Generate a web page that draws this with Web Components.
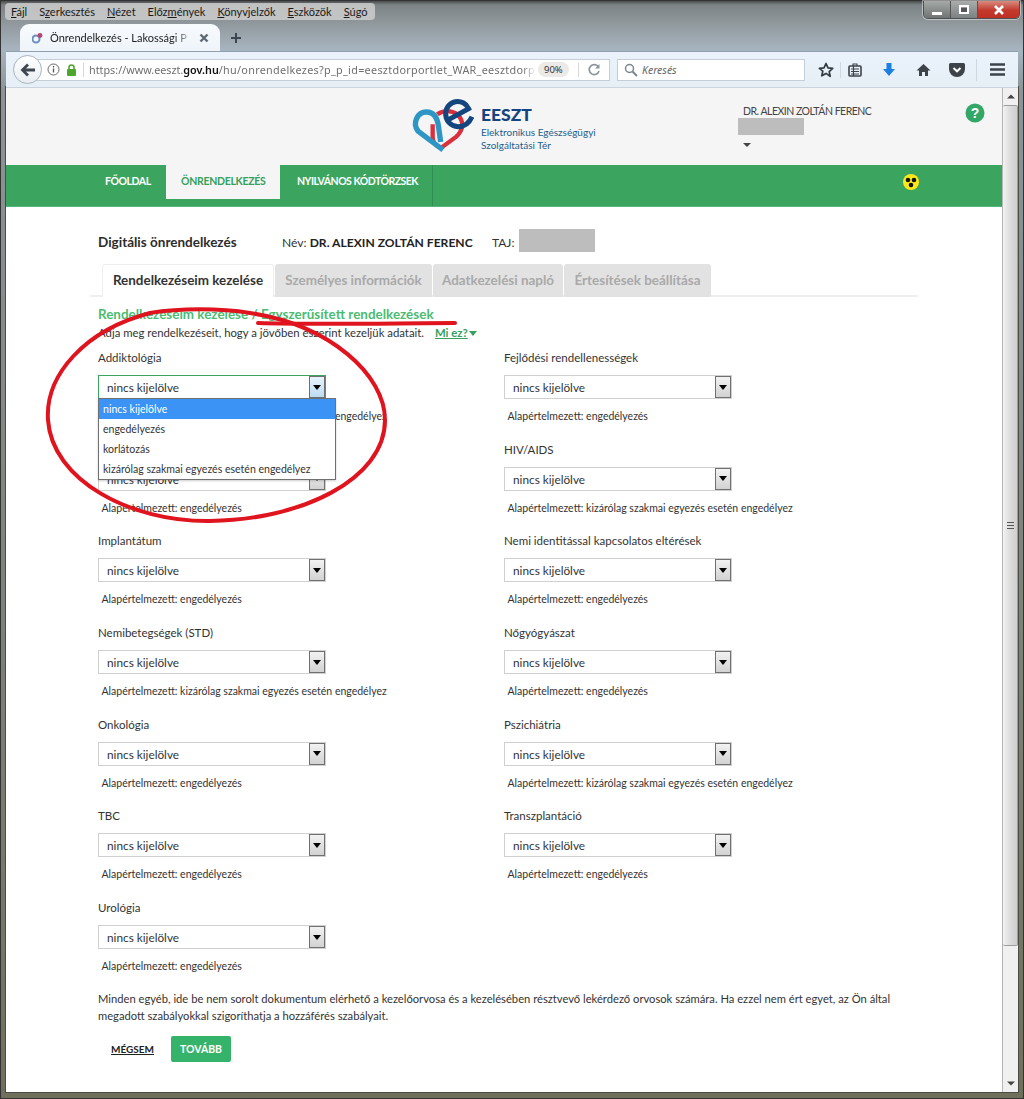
<!DOCTYPE html>
<html lang="hu"><head><meta charset="utf-8"><title>Önrendelkezés</title>
<style>
html,body{margin:0;padding:0;background:#000}
body{width:1024px;height:1099px;overflow:hidden;font-family:Lato,"Noto Sans",sans-serif}
</style></head><body>
<browser-window>
  <site-header></site-header>
  <site-nav></site-nav>
  <page-main>
    <form-row a-label="Addiktológia" a-note="Alapértelmezett: kizárólag szakmai egyezés esetén engedélyez" b-label="Fejlődési rendellenességek" b-note="Alapértelmezett: engedélyezés" open></form-row>
    <form-row a-label=" " a-note="Alapértelmezett: engedélyezés" b-label="HIV/AIDS" b-note="Alapértelmezett: kizárólag szakmai egyezés esetén engedélyez"></form-row>
    <form-row a-label="Implantátum" a-note="Alapértelmezett: engedélyezés" b-label="Nemi identitással kapcsolatos eltérések" b-note="Alapértelmezett: engedélyezés"></form-row>
    <form-row a-label="Nemibetegségek (STD)" a-note="Alapértelmezett: kizárólag szakmai egyezés esetén engedélyez" b-label="Nőgyógyászat" b-note="Alapértelmezett: engedélyezés"></form-row>
    <form-row a-label="Onkológia" a-note="Alapértelmezett: engedélyezés" b-label="Pszichiátria" b-note="Alapértelmezett: kizárólag szakmai egyezés esetén engedélyez"></form-row>
    <form-row a-label="TBC" a-note="Alapértelmezett: engedélyezés" b-label="Transzplantáció" b-note="Alapértelmezett: engedélyezés"></form-row>
    <form-row a-label="Urológia" a-note="Alapértelmezett: engedélyezés"></form-row>
  </page-main>
</browser-window>
<script>
const FONT='Lato,"Noto Sans",sans-serif';
function def(name,html,init){
  customElements.define(name,class extends HTMLElement{
    constructor(){super();this.attachShadow({mode:'open'});}
    connectedCallback(){this.shadowRoot.innerHTML=typeof html==='function'?html(this):html;if(init)init(this);}
  });
}
def('browser-window',`<style>
:host{display:block;width:1024px;height:1099px;box-sizing:border-box;position:relative;
background:linear-gradient(180deg,#3d3f40 0,#7d8385 5px,#8f979b 22px,#a7b4bf 50px,#8b9497 90px,#7d8078 60%,#6f705c 100%);padding:0 6px 7px;overflow:hidden;box-shadow:inset 0 0 0 1px #333}
.frame{display:flex;flex-direction:column;height:100%;margin:0 -6px;}
.view{flex:1;min-height:0;display:flex;margin:0 6px;background:#fff;border-top:1px solid #c9d4de;box-shadow:0 0 0 1px #4b4d45}
.page{width:996px;display:flex;flex-direction:column;overflow:hidden}
</style>
<div class="frame"><div><menu-bar></menu-bar><tab-strip></tab-strip><tool-bar></tool-bar></div>
<div class="view"><div class="page"><slot></slot></div><scroll-bar></scroll-bar></div></div>
<window-buttons></window-buttons>`);
def('window-buttons',`<style>
:host{position:absolute;left:923px;top:1px;width:95px;height:17px;display:flex;border:1px solid #4b4f52;border-top:0;border-radius:0 0 5px 5px;overflow:hidden;box-shadow:0 0 0 1px rgba(255,255,255,.45)}
div{display:flex;align-items:center;justify-content:center}
.a{width:26px;background:linear-gradient(#a5a9a8,#6f7473)}
.b{width:26px;background:linear-gradient(#a9adac,#7b8080);border-left:1px solid #555}
.c{flex:1;background:linear-gradient(#d88a80,#c33a2c 55%,#bd3024);border-left:1px solid #555}
</style><div class="a"><svg width="12" height="10"><rect x="1" y="7" width="10" height="3" fill="#fff"/></svg></div>
<div class="b"><svg width="12" height="10"><rect x="2" y="1" width="8" height="7" fill="none" stroke="#fff" stroke-width="2"/><rect x="3" y="3" width="6" height="4" fill="#555"/></svg></div>
<div class="c"><svg width="14" height="12"><path d="M3 2l8 8M11 2l-8 8" stroke="#fff" stroke-width="2.6"/></svg></div>`);
def('menu-bar',`<style>
:host{display:flex;gap:12px;box-sizing:border-box;margin:3px 0 0 5px;width:370px;height:17px;padding:0 0 0 6px;align-items:center;background:rgba(205,205,205,.85);border-radius:4px;font:11px/17px Lato,sans-serif;color:#1a1a1a}
u{text-underline-offset:1px}
</style><span><u>F</u>ájl</span><span>S<u>z</u>erkesztés</span><span><u>N</u>ézet</span><span>Előz<u>m</u>ények</span><span><u>K</u>önyvjelzők</span><span><u>E</u>szközök</span><span><u>S</u>úgó</span>`);
def('tab-strip',`<style>
:host{display:flex;align-items:center;height:27px;margin-top:4px;padding-left:20px;box-sizing:border-box;font:11px Lato,sans-serif;color:#222}
.tab{width:200px;height:27px;box-sizing:border-box;display:flex;align-items:center;background:linear-gradient(#f8fbfe,#eef4fa);border-radius:9px 9px 0 0;padding-left:12px;position:relative}
.t{margin-left:6px;width:144px;white-space:nowrap;-webkit-mask-image:linear-gradient(90deg,#000 86%,transparent);mask-image:linear-gradient(90deg,#000 86%,transparent)}
.x{margin-left:5px;color:#5f6a74}
.plus{margin-left:10px}
</style><div class="tab"><svg width="12" height="12" viewBox="0 0 12 12"><circle cx="4" cy="7" r="3.5" fill="none" stroke="#6a8fc0" stroke-width="2"/><circle cx="8" cy="3.5" r="2.400" fill="#b8456e"/></svg><span class="t">Önrendelkezés - Lakossági P</span><svg class="x" width="10" height="10" viewBox="0 0 10 10"><path d="M1.500 1.500l7 7M8.500 1.500l-7 7" stroke="#5f6a74" stroke-width="2.400"/></svg></div>
<svg class="plus" width="12" height="12"><path d="M6 1v10M1 6h10" stroke="#3c4650" stroke-width="2"/></svg>`);
def('tool-bar',`<style>
:host{display:flex;align-items:center;height:36px;box-sizing:border-box;margin:0 6px;padding:0 0 0 7px;background:linear-gradient(#eaf3fb,#e6eef6);border-top:1px solid #8fa0ae;position:relative;font:11.500px "Noto Sans",sans-serif}
.back{width:29px;height:29px;border:1px solid #a8b4be;border-radius:50%;background:linear-gradient(#fff,#e9eef2);display:flex;align-items:center;justify-content:center;box-sizing:border-box;z-index:1;flex:none}
.url{margin-left:-6px;width:574px;height:22px;box-sizing:border-box;background:#fff;border:1px solid #c4ced7;display:flex;align-items:center;padding-left:10px;flex:none}
.sep{width:1px;height:14px;background:#d8d8d8;margin:0 5px 0 6px;flex:none}
.addr{font-size:10.800px;color:#6f6f6f;white-space:nowrap;width:447px;flex:none;-webkit-mask-image:linear-gradient(90deg,#000 97%,transparent);mask-image:linear-gradient(90deg,#000 97%,transparent)}
.addr b{color:#111;font-weight:600}
.addr span{letter-spacing:.3px}
.zoom{font-size:9.500px;background:#eceae6;border-radius:8px;padding:1px 6px;color:#333;margin-left:2px;flex:none}
.search{margin-left:7px;width:188px;height:22px;box-sizing:border-box;background:#fff;border:1px solid #c4ced7;display:flex;align-items:center;padding-left:6px;color:#666;font-style:italic;font-size:10.500px;gap:4px;flex:none}
.icons{display:flex;align-items:center;margin-left:13px}
.i{display:flex;flex:none}
</style>
<div class="back"><svg width="16" height="14" viewBox="0 0 16 14"><path d="M8 1.500 2.500 7 8 12.500M3 7h12" fill="none" stroke="#3f4750" stroke-width="2.800"/></svg></div>
<div class="url">
<svg width="13" height="13" viewBox="0 0 13 13" style="flex:none"><circle cx="6.500" cy="6.500" r="5.500" fill="none" stroke="#666"/><path d="M6.500 5.500v4M6.500 3v1.600" stroke="#555" stroke-width="1.300"/></svg>
<svg width="11" height="12" viewBox="0 0 11 12" style="margin-left:6px;flex:none"><rect x="1" y="5" width="9" height="7" rx="1" fill="#4da52e"/><path d="M3 5V3.500a2.500 2.500 0 0 1 5 0V5" fill="none" stroke="#4da52e" stroke-width="1.600"/></svg>
<span class="sep"></span>
<span class="addr">https://www.eeszt.<b>gov.hu</b><span>/hu/onrendelkezes?p_p_id=eesztdorportlet_WAR_eesztdorp</span></span>
<span class="zoom">90%</span><span class="sep" style="margin:0 0 0 9px"></span>
<svg width="14" height="14" viewBox="0 0 14 14" style="margin-left:8px;flex:none"><path d="M11.500 4A5 5 0 1 0 12 8" fill="none" stroke="#8b959c" stroke-width="1.700"/><path d="M12.500 1v4.500H8z" fill="#8b959c"/></svg>
</div>
<div class="search"><svg width="14" height="14" viewBox="0 0 14 14"><circle cx="5.500" cy="5.500" r="4" fill="none" stroke="#7b858e" stroke-width="1.500"/><path d="M8.500 8.500 13 13" stroke="#7b858e" stroke-width="2"/></svg><span>Keresés</span></div>
<div class="icons">
<svg class="i" width="16" height="16" viewBox="0 0 16 16"><path d="M8 1.500l2 4.400 4.700.5-3.500 3.200 1 4.700L8 11.400l-4.200 2.400 1-4.700L1.300 6.400 6 5.900z" fill="none" stroke="#333a40" stroke-width="1.700" stroke-linejoin="round"/></svg>
<span style="width:1px;height:16px;background:#cfd8e0;margin:0 7px 0 6px"></span>
<svg class="i" width="14" height="14" viewBox="0 0 14 14"><rect x="1" y="3" width="12" height="10" rx="1" fill="none" stroke="#3c4349" stroke-width="1.600"/><path d="M5 3V1h4v2M3 6h8M3 8.500h8M3 11h8M5.500 3v10" stroke="#3c4349" stroke-width="1.100" fill="none"/></svg>
<svg class="i" width="14" height="15" viewBox="0 0 14 15" style="margin-left:20px"><path d="M4.500 1h5v6H13l-6 7-6-7h3.500z" fill="#1c80e2"/></svg>
<svg class="i" width="15" height="14" viewBox="0 0 15 14" style="margin-left:20px"><path d="M7.500 1 .5 7.500H3V13h3V9h3v4h3V7.500h2.500z" fill="#3c4349"/></svg>
<svg class="i" width="16" height="14" viewBox="0 0 16 14" style="margin-left:18px"><path d="M1.500 0h13A1.500 1.500 0 0 1 16 1.500V6A8 8 0 0 1 0 6V1.500A1.500 1.500 0 0 1 1.500 0z" fill="#3c4349"/><path d="M4.500 5 8 8.300 11.500 5" fill="none" stroke="#fff" stroke-width="2"/></svg>
<span style="width:1px;height:22px;background:#cfd8e0;margin:0 13px 0 11px"></span>
<svg class="i" width="15" height="13" viewBox="0 0 15 13"><path d="M0 1.500h15M0 6.500h15M0 11.500h15" stroke="#3c4349" stroke-width="2.600"/></svg>
</div>`);
def('scroll-bar',`<style>
:host{width:16px;flex:none;background:#f0f0f0;display:flex;flex-direction:column;align-items:stretch;box-sizing:border-box;border-left:1px solid #b5b5b5}
.btn{height:17px;display:flex;align-items:center;justify-content:center;flex:none}
.thumb{height:839px;flex:none;background:linear-gradient(90deg,#f3f3f3,#dcdcdc 50%,#cfcfcf);border:1px solid #9d9d9d;border-width:1px 1px 1px 0;border-radius:2px;display:flex;align-items:center;justify-content:center}
.sp{flex:1}
</style><div class="btn"><svg width="8" height="5"><path d="M0 4.500 4 .5l4 4z" fill="#444"/></svg></div>
<div class="thumb"><svg width="7" height="7"><path d="M0 .5h7M0 3.500h7M0 6.500h7" stroke="#555"/></svg></div><div class="sp"></div>
<div class="btn"><svg width="8" height="5"><path d="M0 .5 4 4.500l4-4z" fill="#444"/></svg></div>`);
def('site-header',`<style>
:host{display:flex;height:77px;flex:none;box-sizing:border-box;background:#f5f5f5;padding-top:8px;font-family:${FONT}}
.logo{margin-left:402px;display:flex;gap:1px;width:204px;flex:none}
.txt{color:#1d5f8f;font-size:10px;line-height:13px;padding-top:10px;white-space:nowrap}
.txt b{display:block;font-size:17.500px;line-height:17px;color:#14457e;font-weight:900;margin-bottom:3px}
.user{margin-left:126px;width:66px;flex:none;font-size:10.500px;color:#444;padding-top:8px;line-height:14px;white-space:nowrap}
.name{margin-left:5px;letter-spacing:-.5px}
.box{width:66px;height:17px;background:#bdbdbd;margin:0 0 8px}
.caret{width:0;height:0;border:4px solid transparent;border-top:4px solid #444;border-bottom:0;margin-left:5px}
.help{margin-left:161px;margin-top:7px;flex:none}
</style>
<div class="logo"><svg width="72" height="60" viewBox="0 0 216 180">
<path d="M74 85V125C74 140 85 150 100 155L145 122C168 100 168 75 148 55 130 42 105 42 88 55" fill="none" stroke="#d9303e" stroke-width="13"/>
<path d="M105 162 30 105C12 82 28 48 55 48 82 48 90 75 92 95L98 138" fill="none" stroke="#2e96c4" stroke-width="16"/>
<path d="M116 74 182 38A36 36 0 0 0 113 52 38 38 0 0 0 150 92C170 92 184 80 192 62" fill="none" stroke="#14457e" stroke-width="15"/>
</svg><div class="txt"><b>EESZT</b>Elektronikus Egészségügyi<br>Szolgáltatási Tér</div></div>
<div class="user"><div class="name">DR. ALEXIN ZOLTÁN FERENC</div><div class="box"></div><div class="caret"></div></div>
<svg class="help" width="20" height="20" viewBox="0 0 20 20"><circle cx="10" cy="10" r="9.500" fill="#33a768"/><text x="10" y="15" text-anchor="middle" font-family="Liberation Sans" font-weight="700" font-size="14" fill="#fff">?</text></svg>`);
def('site-nav',`<style>
:host{display:flex;height:42px;flex:none;box-sizing:border-box;background:#3ba55f;padding-left:84px;font:700 10.500px/33px ${FONT};letter-spacing:-.3px;color:#fff;border-bottom:1px solid #58b57a;position:relative;white-space:nowrap}
a{display:block;height:34px;padding:0 15px;box-sizing:border-box}
a.f{width:75px;letter-spacing:-.45px}
.on{background:#f5f5f5;color:#36a05c;margin-left:1px;width:114px}
.d{border-right:1px solid #2f8f50;height:41px;padding:0 14px 0 17px;width:153px;letter-spacing:-.5px}
.icon{margin:9px 0 0 470px;flex:none}
</style><a class="f">FŐOLDAL</a><a class="on">ÖNRENDELKEZÉS</a><a class="d">NYILVÁNOS KÓDTÖRZSEK</a>
<svg class="icon" width="16" height="16" viewBox="0 0 16 16"><circle cx="8" cy="8" r="8" fill="#ffe81a"/><circle cx="5" cy="6" r="2.300" fill="#111"/><circle cx="11" cy="6" r="2.300" fill="#111"/><circle cx="8" cy="11" r="2.300" fill="#111"/></svg>`);
def('page-main',`<style>
:host{display:block;position:relative;flex:1;background:#fff;box-sizing:border-box;padding:22px 0 0 92px;font:11.500px ${FONT};color:#333}
.top{display:flex;align-items:center;height:23px}
h1{font-size:13.500px;font-weight:700;margin:3px 0 0;width:184px;color:#2c2c2c}
.n{font-size:12.100px;width:210px;white-space:nowrap;margin-top:3px}.n b{font-weight:700;color:#222}
.taj{font-size:12px;margin-top:3px}.mask{width:76px;height:23px;background:#bdbdbd;margin-left:5px}
.tabs{display:flex;margin:12px 0 0 -8px;padding-left:12px;width:828px;box-sizing:border-box;border-bottom:2px solid #eee;height:33px;gap:1px}
.tab{height:33px;box-sizing:border-box;background:#e2e2e2;color:#a9a9a9;font:700 13.450px/32px ${FONT};text-align:center;border-radius:3px 3px 0 0}
.tab.on{background:#fff;color:#333;border:1px solid #eee;border-bottom:0;line-height:30px}
h2{font-size:13.450px;color:#4cbb72;margin:8px 0 0;line-height:18px;font-weight:700}
.lead{margin:2px 0 0;line-height:16px;font-size:11.350px;display:flex;white-space:pre}
.lead a{color:#36a05c;font-weight:700;text-decoration:underline;margin-left:8px}
.lead i{display:inline-block;border:4px solid transparent;border-top:5px solid #36a05c;border-bottom:0;margin:6px 0 0 1px}
.rows{margin-top:8px}
.end{margin:-1px 0 0;line-height:17px;width:810px;font-size:11.200px}
.acts{display:flex;align-items:center;margin:12px 0 0 13px;font-weight:700;font-size:10px}
.acts a{text-decoration:underline;color:#222;width:60px}
.acts button{width:60px;height:26px;border:0;border-radius:2px;background:#36b36b;color:#fff;font:700 10.500px ${FONT}}
.ann{position:absolute;left:0;top:0;pointer-events:none;z-index:5}
</style>
<div class="top"><h1>Digitális önrendelkezés</h1><span class="n">Név: <b>DR. ALEXIN ZOLTÁN FERENC</b></span><span class="taj">TAJ:</span><span class="mask"></span></div>
<div class="tabs"><div class="tab on" style="width:172px">Rendelkezéseim kezelése</div><div class="tab" style="width:157px">Személyes információk</div><div class="tab" style="width:130px">Adatkezelési napló</div><div class="tab" style="width:147px">Értesítések beállítása</div></div>
<h2>Rendelkezéseim kezelése / Egyszerűsített rendelkezések</h2>
<div class="lead">Adja meg rendelkezéseit, hogy a jövőben eszerint kezeljük adatait. <a>Mi ez?</a><i></i></div>
<div class="rows"><slot></slot></div>
<p class="end">Minden egyéb, ide be nem sorolt dokumentum elérhető a kezelőorvosa és a kezelésében résztvevő lekérdező orvosok számára. Ha ezzel nem ért egyet, az Ön által megadott szabályokkal szigoríthatja a hozzáférés szabályait.</p>
<div class="acts"><a>MÉGSEM</a><button>TOVÁBB</button></div>
<svg class="ann" width="996" height="900" viewBox="6 207 996 900"><path d="M150 313C85 330 45 375 48 420 52 480 130 522 210 521 300 520 385 480 385 420 385 375 330 325 250 313 220 308 180 308 150 313Z" fill="none" stroke="#e0141e" stroke-width="4"/><path d="M258 323C320 325 400 323 455 323" fill="none" stroke="#e0141e" stroke-width="4" stroke-linecap="round"/></svg>`);
def('form-row',h=>{
  const f=(l,n,o)=>l?`<form-field label="${l}" note="${n}" ${o?'open':''}></form-field>`:'<div></div>';
  return `<style>:host{display:grid;grid-template-columns:406px 406px;height:91.700px;font:11.500px ${FONT}}</style>`+
  f(h.getAttribute('a-label'),h.getAttribute('a-note'),h.hasAttribute('open'))+f(h.getAttribute('b-label'),h.getAttribute('b-note'));
});
def('form-field',h=>`<style>
:host{display:block;font:11.500px/16px ${FONT};color:#333}
.l{height:18px;line-height:18px}
x-select{margin-top:8px}
.n{margin:9px 0 0 3.500px;font-size:10.500px}
</style><div class="l">${h.getAttribute('label')}</div><x-select ${h.hasAttribute('open')?'open':''}></x-select><div class="n">${h.getAttribute('note')}</div>`);
def('x-select',h=>{const o=h.hasAttribute('open');return `<style>
:host{display:block;position:relative;width:228px;height:24px;box-sizing:border-box;background:#fff;border:1px solid ${o?'#3ba55f':'#d0d0d0'};font:11.800px/24px ${FONT};color:#333;padding-left:8px}
.b{position:absolute;right:0;top:0;width:16px;height:22px;box-sizing:border-box;border:1px solid #707070;background:${o?'linear-gradient(#e8f3fb,#bcdcf2)':'linear-gradient(#f2f2f2,#d2d2d2)'};display:flex;align-items:center;justify-content:center}
.b i{border:4px solid transparent;border-top:5px solid #000;border-bottom:0}
.menu{position:absolute;left:-1px;top:22px;width:238px;box-sizing:border-box;background:#fff;border:1px solid #707070;z-index:3;font-size:10.550px;line-height:20px;box-shadow:0 1px 2px rgba(0,0,0,.2)}
.menu div{height:20px;padding-left:4px;white-space:nowrap}
.menu .on{background:#3b93f5;color:#fff}
</style>nincs kijelölve<span class="b"><i></i></span>${o?'<div class="menu"><div class="on">nincs kijelölve</div><div>engedélyezés</div><div>korlátozás</div><div>kizárólag szakmai egyezés esetén engedélyez</div></div>':''}`});
</script>
</body></html>
